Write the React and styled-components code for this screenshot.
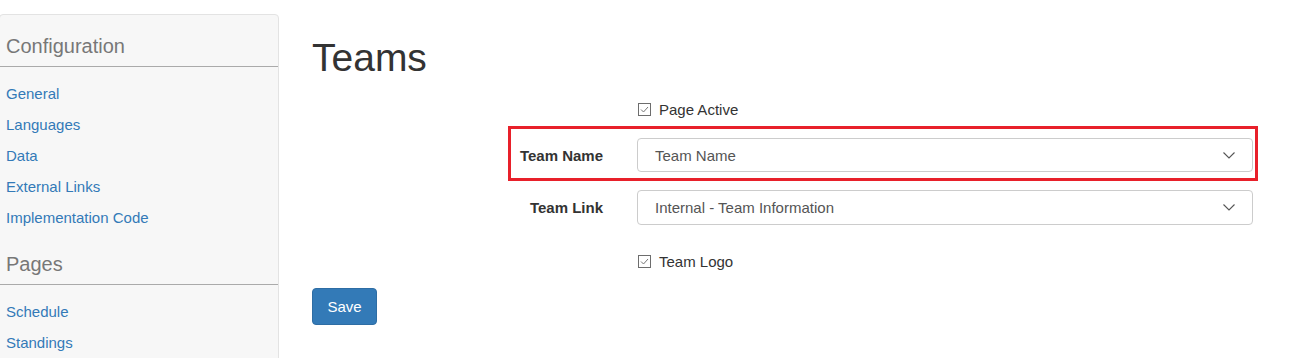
import React from 'react'
import styled, { createGlobalStyle } from 'styled-components'

const sections = [
  { title: 'Configuration', links: ['General', 'Languages', 'Data', 'External Links', 'Implementation Code'] },
  { title: 'Pages', links: ['Schedule', 'Standings'] },
]

const GlobalStyle = createGlobalStyle`
  html, body {
    margin: 0;
    padding: 0;
    background: #fff;
    overflow: hidden;
  }
  body {
    font-family: "Liberation Sans", Arial, sans-serif;
    font-size: 15px;
    color: #333;
  }
`

const Page = styled.div`
  display: flex;
  align-items: flex-start;
  width: 1290px;
  height: 358px;
  overflow: hidden;
`

const Sidebar = styled.nav`
  width: 280px;
  height: 420px;
  margin: 14px 0 0 -1px;
  flex-shrink: 0;
  background: #f7f7f7;
  border: 1px solid #e3e3e3;
  border-radius: 4px;
  box-sizing: border-box;
`

const SectionTitle = styled.h3`
  margin: 0;
  padding: 19px 6px 8px;
  font-size: 20px;
  line-height: 24px;
  font-weight: normal;
  color: #777;
  border-bottom: 1px solid #aaa;
`

const LinkList = styled.ul`
  list-style: none;
  margin: 11px 0 0;
  padding: 0 6px;
`

const NavLink = styled.li`
  font-size: 15px;
  line-height: 31px;
  color: #337ab7;
`

const Main = styled.main`
  flex: 1;
  padding: 0 32px 0 33px;
`

const Title = styled.h1`
  margin: 35px 0 0;
  font-size: 39px;
  line-height: 46px;
  font-weight: normal;
  color: #333;
`

const Form = styled.div`
  margin: 15px 0 0 196px;
`

const Row = styled.div`
  display: flex;
  align-items: center;
  border: 3px solid ${p => (p.$highlight ? '#e8202a' : 'transparent')};
  padding: ${p => (p.$highlight ? '9px 2px 6px 7px' : '0 2px 0 7px')};
  margin-top: ${p => p.$gap || 0}px;
`

const Label = styled.label`
  width: 85px;
  margin-right: 34px;
  flex-shrink: 0;
  text-align: right;
  font-weight: bold;
  font-size: 15px;
  color: #333;
`

const Select = styled.div`
  flex: 1;
  height: ${p => p.$h || 34}px;
  display: flex;
  align-items: center;
  justify-content: space-between;
  padding: 0 17px 0 17px;
  box-sizing: border-box;
  border: 1px solid #ccc;
  border-radius: 4px;
  background: #fff;
  color: #555;
  font-size: 15px;
`

const Check = styled.div`
  display: flex;
  align-items: center;
  gap: 8px;
  height: 20px;
  margin-left: 1px;
  font-size: 15px;
  color: #333;
`

const Box = styled.span`
  width: 13px;
  height: 13px;
  box-sizing: border-box;
  border: 1px solid #6d6d6d;
  display: flex;
  align-items: center;
  justify-content: center;
`

const SaveButton = styled.button`
  margin-top: 14px;
  width: 65px;
  height: 37px;
  padding: 0;
  background: #337ab7;
  border: 1px solid #2e6da4;
  border-radius: 4px;
  color: #fff;
  font-family: "Liberation Sans", Arial, sans-serif;
  font-size: 15px;
`

function Checkbox({ label }) {
  return (
    <Check>
      <Box>
        <svg width="9" height="7" viewBox="0 0 9 7">
          <path d="M1 3.5 L3.5 6 L8 1" fill="none" stroke="#777" strokeWidth="1" />
        </svg>
      </Box>
      {label}
    </Check>
  )
}

function Chevron() {
  return (
    <svg width="12" height="7" viewBox="0 0 12 7">
      <path d="M0.5 0.5 L6 6 L11.5 0.5" fill="none" stroke="#555" strokeWidth="1.1" />
    </svg>
  )
}

export default function App() {
  return (
    <>
      <GlobalStyle />
      <Page>
        <Sidebar>
          {sections.map(s => (
            <div key={s.title}>
              <SectionTitle>{s.title}</SectionTitle>
              <LinkList>
                {s.links.map(l => <NavLink key={l}>{l}</NavLink>)}
              </LinkList>
            </div>
          ))}
        </Sidebar>
        <Main>
          <Title>Teams</Title>
          <Form>
            <Row>
              <Label />
              <Checkbox label="Page Active" />
            </Row>
            <Row $highlight $gap={4}>
              <Label>Team Name</Label>
              <Select>Team Name<Chevron /></Select>
            </Row>
            <Row $gap={6}>
              <Label>Team Link</Label>
              <Select $h={35}>Internal - Team Information<Chevron /></Select>
            </Row>
            <Row $gap={20}>
              <Label />
              <Checkbox label="Team Logo" />
            </Row>
          </Form>
          <SaveButton>Save</SaveButton>
        </Main>
      </Page>
    </>
  )
}
